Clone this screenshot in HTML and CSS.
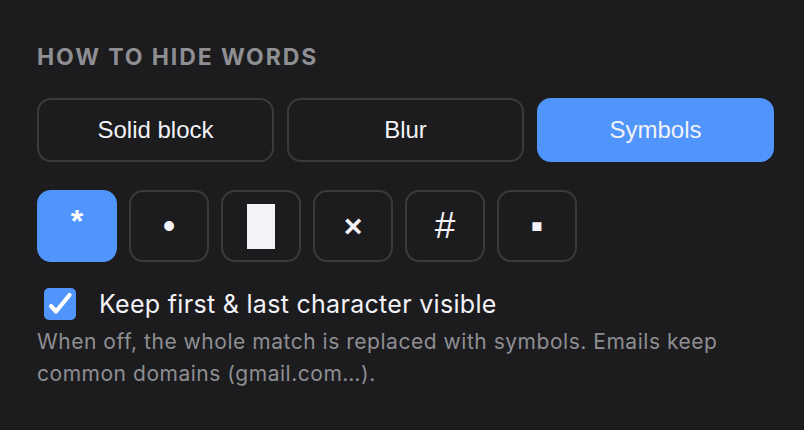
FILE: index.html
```html
<!DOCTYPE html>
<html lang="en">
<head>
<meta charset="UTF-8">
<meta name="viewport" content="width=device-width, initial-scale=1.0">
<title>Hide words</title>
<link rel="stylesheet" href="styles.css">
</head>
<body>
  <div class="panel">
    <h2 class="section-title">How to hide words</h2>

    <div class="mode-row">
      <button class="mode-btn">Solid block</button>
      <button class="mode-btn">Blur</button>
      <button class="mode-btn active">Symbols</button>
    </div>

    <div class="symbol-row">
      <button class="symbol-btn active"><span class="sym-star">*</span></button>
      <button class="symbol-btn"><span class="sym-dot">•</span></button>
      <button class="symbol-btn"><span class="sym-block"></span></button>
      <button class="symbol-btn"><span class="sym-cross">×</span></button>
      <button class="symbol-btn"><span class="sym-hash">#</span></button>
      <button class="symbol-btn"><span class="sym-square">▪</span></button>
    </div>

    <label class="check-row">
      <span class="checkbox">
        <svg viewBox="0 0 32 32" width="32" height="32">
          <path d="M7 18 L12 23.5 L25.5 7" fill="none" stroke="#fff" stroke-width="4.2" stroke-linecap="round" stroke-linejoin="round"/>
        </svg>
      </span>
      <span class="check-label">Keep first &amp; last character visible</span>
    </label>
    <p class="hint">When off, the whole match is replaced with symbols. Emails keep common domains (gmail.com…).</p>
  </div>
</body>
</html>
```

FILE: styles.css
```css
body {
  margin: 0;
  background-color: #1c1c1e;
  color: #f2f2f7;
  font-family: Inter, "Liberation Sans", sans-serif;
}
.panel {
  width: 737px;
  padding: 43px 0 0 37px;
}
.section-title {
  margin: 0;
  font-size: 23px;
  line-height: 28px;
  font-weight: 700;
  letter-spacing: 1.9px;
  text-transform: uppercase;
  color: #8e8e93;
}
.mode-row {
  display: grid;
  grid-template-columns: repeat(3, 1fr);
  gap: 13px;
  margin-top: 27px;
}
.mode-btn {
  height: 64px;
  border: 2px solid #3a3a3c;
  border-radius: 14px;
  background: transparent;
  color: #f2f2f7;
  font-family: "Liberation Sans", Arial, sans-serif;
  font-size: 24px;
  padding: 0;
}
.mode-btn.active {
  background-color: #4f95fc;
  border-color: #4f95fc;
}
.symbol-row {
  display: flex;
  gap: 12px;
  margin-top: 28px;
}
.symbol-btn {
  width: 80px;
  height: 72px;
  border: 2px solid #3a3a3c;
  border-radius: 14px;
  background: transparent;
  color: #f2f2f7;
  padding: 0;
  display: flex;
  align-items: center;
  justify-content: center;
  font-family: "Liberation Sans", Arial, sans-serif;
}
.symbol-btn.active {
  background-color: #4f95fc;
  border-color: #4f95fc;
  color: #fff;
}
.sym-star {
  font-size: 32px;
  font-weight: 700;
  margin-top: -10px;
}
.sym-dot {
  font-size: 36px;
}
.sym-block {
  display: block;
  width: 28px;
  height: 45px;
  background-color: #f2f2f7;
}
.sym-cross {
  font-size: 32px;
  font-weight: 700;
}
.sym-hash {
  font-size: 37px;
}
.sym-square {
  font-size: 36px;
}
.check-row {
  display: flex;
  align-items: center;
  margin-top: 26px;
  padding-left: 7px;
}
.checkbox {
  width: 32px;
  height: 32px;
  border-radius: 5px;
  background-color: #4f95fc;
  display: flex;
}
.check-label {
  margin-left: 23px;
  font-size: 25px;
  line-height: 32px;
  letter-spacing: 0.3px;
  color: #f2f2f7;
}
.hint {
  margin: 6px 0 0;
  max-width: 720px;
  font-size: 21px;
  line-height: 32px;
  color: #8e8e93;
  letter-spacing: 0.53px;
}
```
